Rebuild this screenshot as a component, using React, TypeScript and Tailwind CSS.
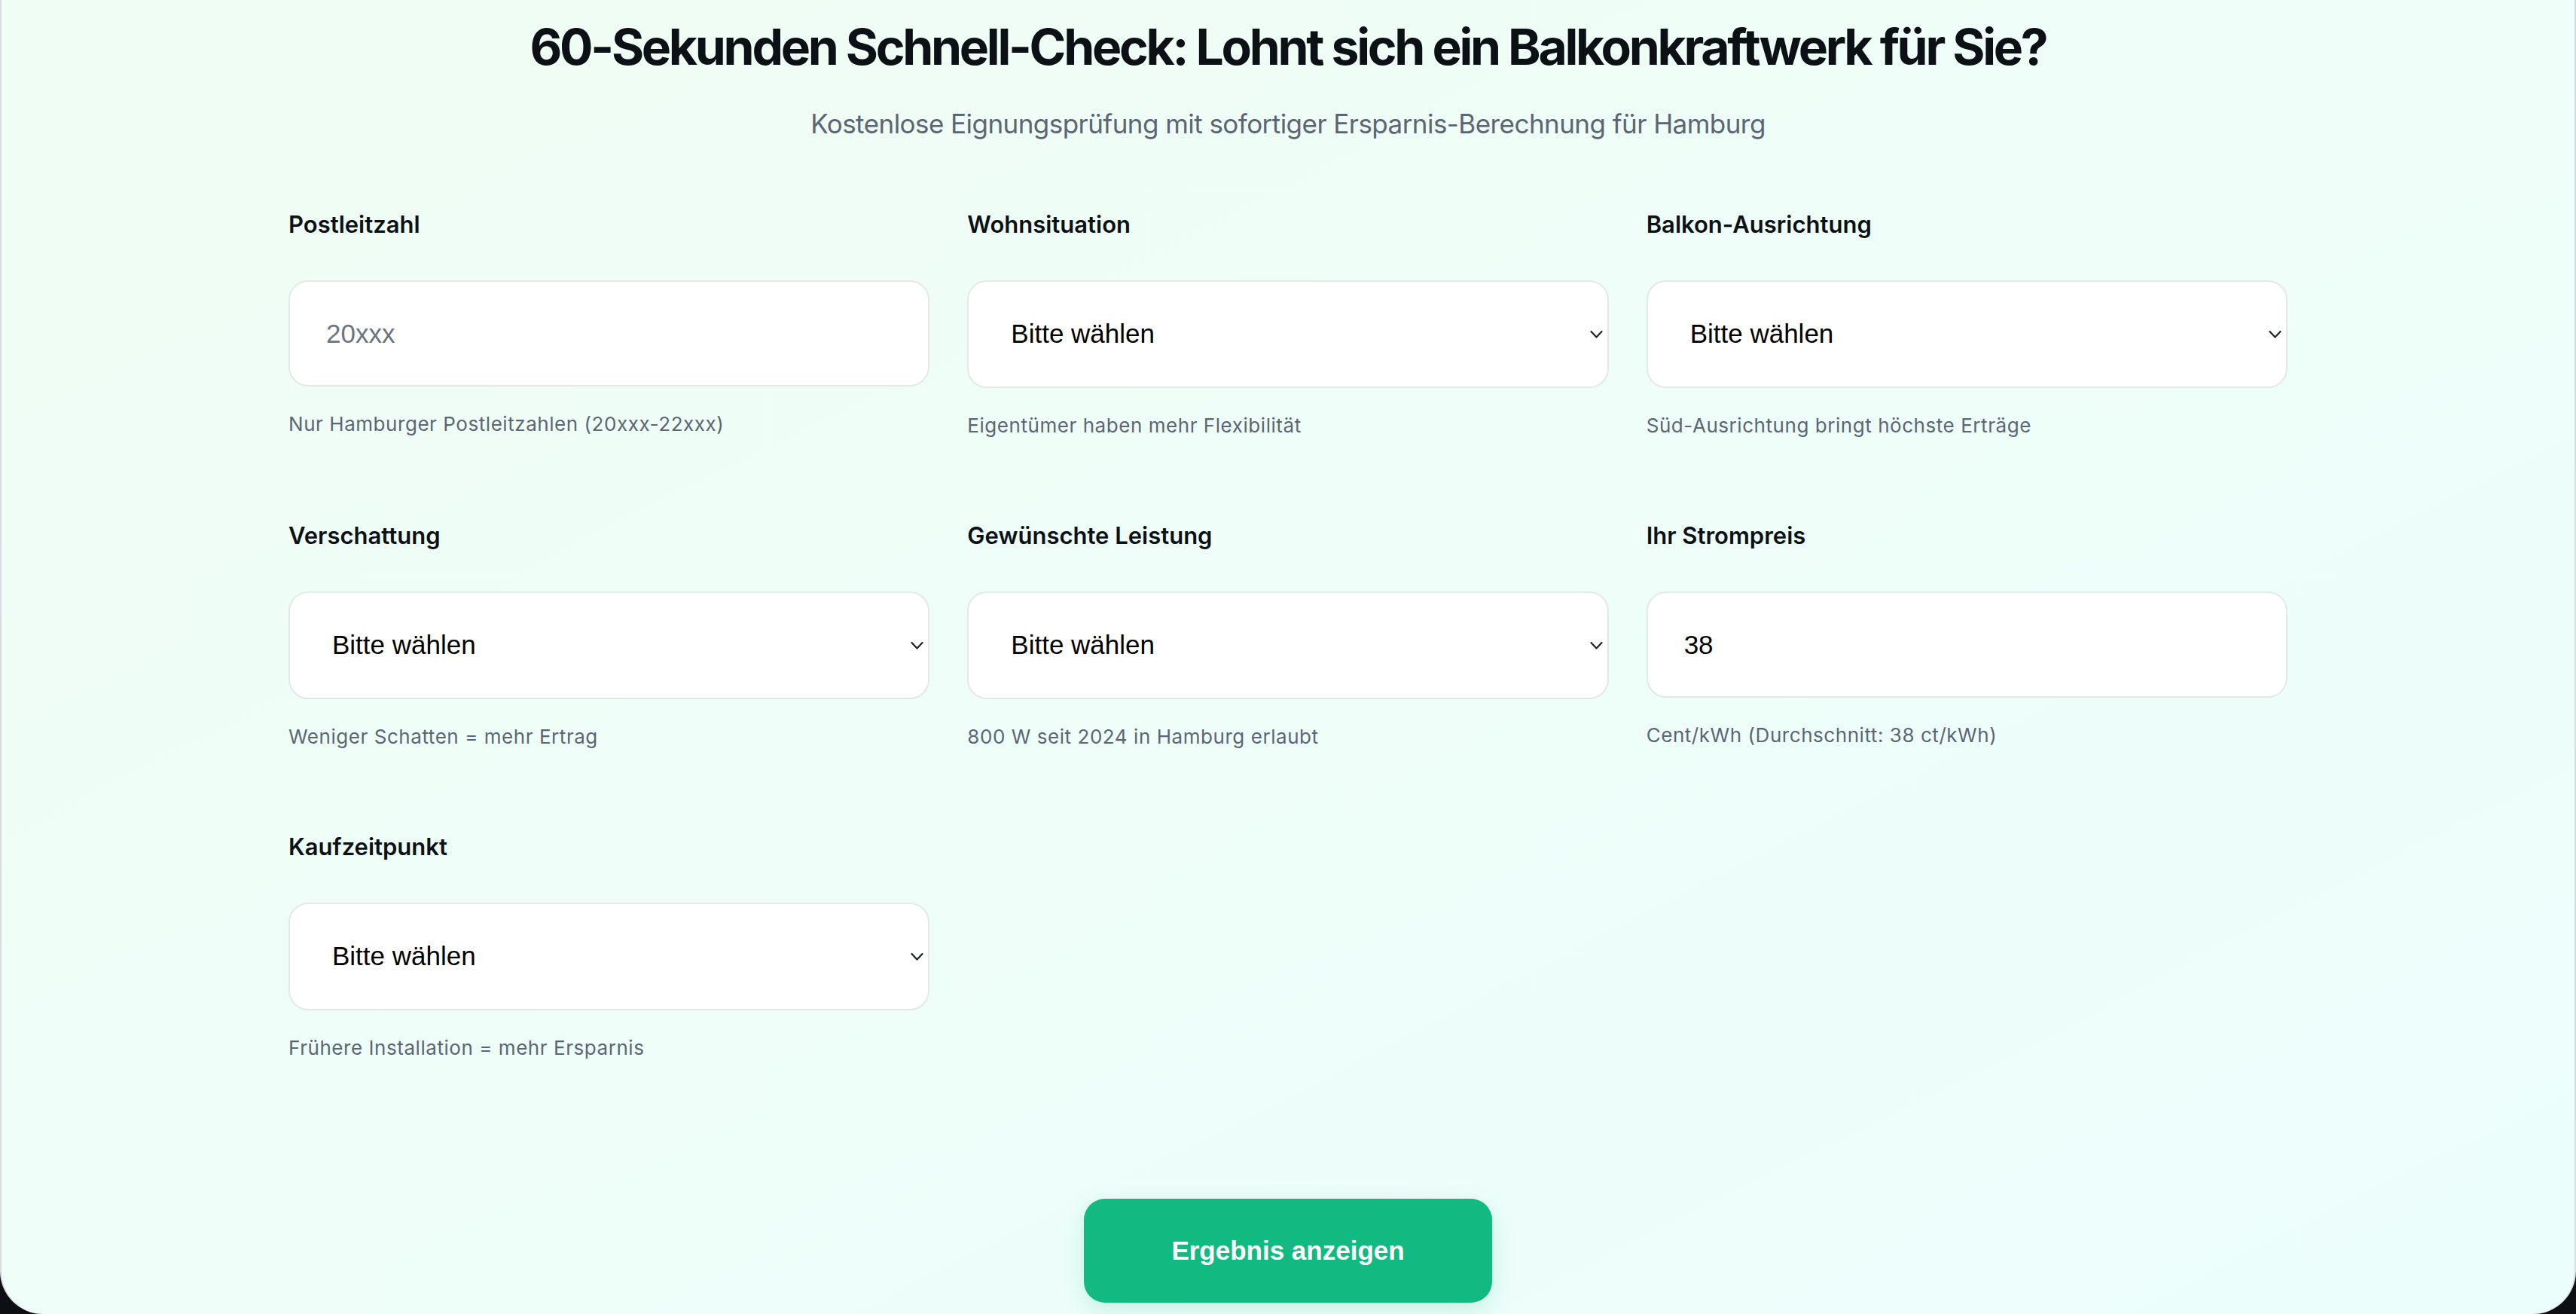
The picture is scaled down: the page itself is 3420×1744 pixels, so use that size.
import type { ReactNode } from 'react';

type Field = {
  label: string;
  hint: string;
  kind: 'input' | 'select';
  placeholder?: string;
  value?: string;
};

const fields: Field[] = [
  { label: 'Postleitzahl', hint: 'Nur Hamburger Postleitzahlen (20xxx-22xxx)', kind: 'input', placeholder: '20xxx' },
  { label: 'Wohnsituation', hint: 'Eigentümer haben mehr Flexibilität', kind: 'select' },
  { label: 'Balkon-Ausrichtung', hint: 'Süd-Ausrichtung bringt höchste Erträge', kind: 'select' },
  { label: 'Verschattung', hint: 'Weniger Schatten = mehr Ertrag', kind: 'select' },
  { label: 'Gewünschte Leistung', hint: '800 W seit 2024 in Hamburg erlaubt', kind: 'select' },
  { label: 'Ihr Strompreis', hint: 'Cent/kWh (Durchschnitt: 38 ct/kWh)', kind: 'input', value: '38' },
  { label: 'Kaufzeitpunkt', hint: 'Frühere Installation = mehr Ersparnis', kind: 'select' },
];

function Chevron() {
  return (
    <svg
      className="pointer-events-none absolute right-[8px] top-1/2 -translate-y-1/2"
      width="17"
      height="11"
      viewBox="0 0 17 11"
      fill="none"
    >
      <path d="M1.5 1.5 8.5 9 15.5 1.5" stroke="#1f2329" strokeWidth="2.2" strokeLinecap="round" strokeLinejoin="round" />
    </svg>
  );
}

function FormField({ field }: { field: Field }) {
  let control: ReactNode;
  if (field.kind === 'input') {
    control = (
      <input
        type="text"
        defaultValue={field.value}
        placeholder={field.placeholder}
        className="mt-[52px] block h-[141px] w-full rounded-[26px] border-2 border-[#e3e9e7] bg-white px-[48px] font-['Liberation_Sans',Arial,sans-serif] text-[35px] text-black outline-none placeholder:text-[#6b7480]"
      />
    );
  } else {
    control = (
      <div className="relative mt-[52px]">
        <select
          defaultValue=""
          className="block h-[143px] w-full appearance-none rounded-[26px] border-2 border-[#e3e9e7] bg-white pl-[56px] pr-[40px] font-['Liberation_Sans',Arial,sans-serif] text-[35px] text-black outline-none"
        >
          <option value="">Bitte wählen</option>
        </select>
        <Chevron />
      </div>
    );
  }
  return (
    <div>
      <label className="block text-[31px] leading-[44px] font-semibold text-[#0c1115]">{field.label}</label>
      {control}
      <p className="mt-[32px] text-[26px] leading-[36px] tracking-[0.55px] text-[#5b6675]">{field.hint}</p>
    </div>
  );
}

export default function App() {
  return (
    <div className="h-[1744px] w-[3420px] overflow-hidden bg-[#0c0f13]">
      <div className="h-full rounded-b-[57px] border-x-2 border-[#d9dcdf] bg-linear-to-br from-[#f0fdf4] to-[#ecfefc] font-['Inter',sans-serif]">
        <div className="pt-[22px] text-center">
          <h1 className="text-[66px] leading-[80px] font-bold tracking-[-3.3px] text-[#0c1115]">
            60-Sekunden Schnell-Check: Lohnt sich ein Balkonkraftwerk für Sie?
          </h1>
          <p className="mt-[36px] text-[35px] leading-[52px] tracking-[-0.55px] text-[#5b6675]">
            Kostenlose Eignungsprüfung mit sofortiger Ersparnis-Berechnung für Hamburg
          </p>
        </div>

        <div className="mx-auto mt-[86px] grid w-[2654px] grid-cols-3 gap-x-[50px] gap-y-[106px]">
          {fields.map((f) => (
            <FormField key={f.label} field={f} />
          ))}
        </div>

        <div className="mt-[182px] flex justify-center">
          <button className="h-[138px] w-[542px] rounded-[28px] bg-[#12b981] font-['Liberation_Sans',Arial,sans-serif] text-[35px] font-bold text-white shadow-[0_10px_30px_rgba(16,185,129,0.18)]">
            Ergebnis anzeigen
          </button>
        </div>
      </div>
    </div>
  );
}
